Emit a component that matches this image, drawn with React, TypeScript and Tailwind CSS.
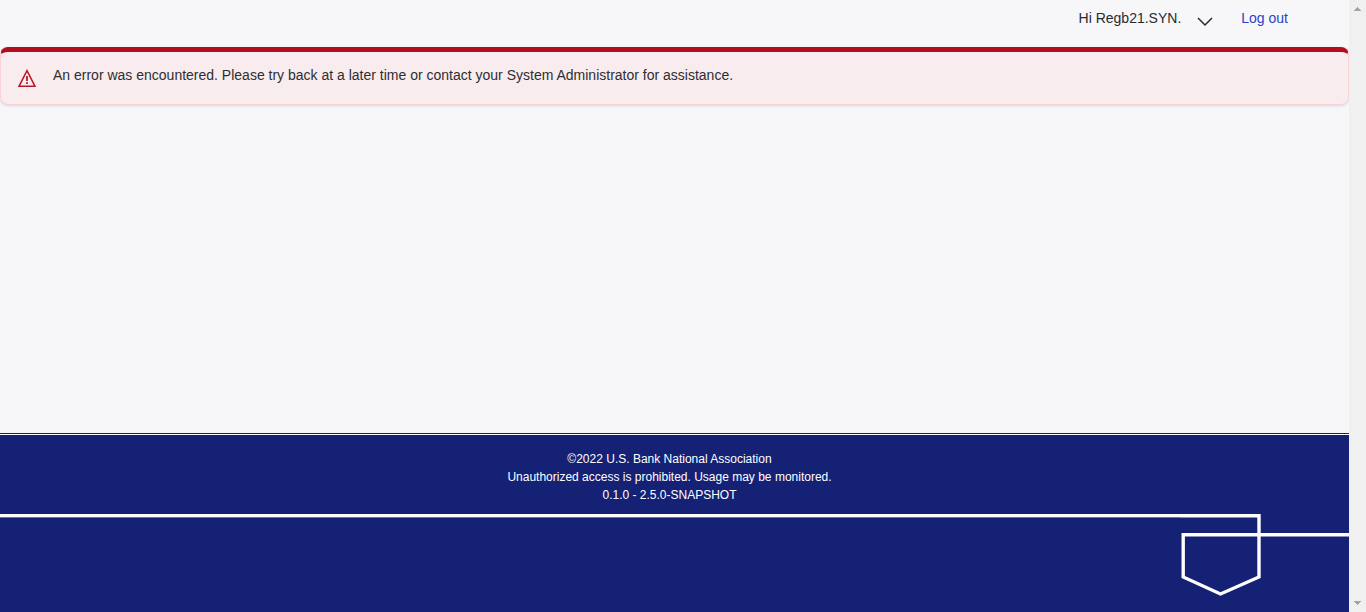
import React from "react";

function Header() {
  return (
    <header className="flex h-[47px] items-start justify-end pt-2 pr-[61px] text-[14px] leading-5">
      <button type="button" className="flex items-start gap-4 text-[#2a2a2e]">
        <span>Hi Regb21.SYN.</span>
        <svg
          className="mt-1 h-4 w-4"
          viewBox="0 0 16 16"
          fill="none"
          stroke="#2a2a2e"
          strokeWidth="1.5"
          aria-hidden="true"
        >
          <path d="M1 6 L8 13 L15 6" />
        </svg>
      </button>
      <a href="#logout" className="ml-7 text-[#2a43c6]">
        Log out
      </a>
    </header>
  );
}

function ErrorAlert() {
  return (
    <div
      role="alert"
      className="flex h-[58px] items-start gap-4 rounded-lg border border-t-[5px] border-[#fad1d6] border-t-[#b50d20] bg-[#f9ecee] pt-[13px] pl-4 text-[14px] leading-5 text-[#2e2e32] shadow-[0_1px_3px_rgba(0,0,0,0.12)]"
    >
      <svg
        className="mt-1 h-5 w-5 shrink-0"
        viewBox="0 0 20 20"
        fill="none"
        stroke="#b9182b"
        strokeWidth="1.5"
        aria-hidden="true"
      >
        <path d="M10 1.6 L18 17.3 H2 Z" />
        <path d="M10 7 V12 M10 13.2 V15" strokeWidth="1.8" />
      </svg>
      <p>
        An error was encountered. Please try back at a later time or contact your System
        Administrator for assistance.
      </p>
    </div>
  );
}

function Footer() {
  return (
    <footer className="border-t border-[#142175]">
      <div className="border-t border-white bg-[#142175]">
        <div className="h-[79px] pt-[15px] pr-[10px] text-center text-[12px] leading-[18px] text-white">
          <p>©2022 U.S. Bank National Association</p>
          <p>Unauthorized access is prohibited. Usage may be monitored.</p>
          <p>0.1.0 - 2.5.0-SNAPSHOT</p>
        </div>
        <div className="flex h-[98px] items-start">
          <div className="h-[4px] grow border-t-[3px] border-b border-t-white border-b-[#6b73a9]" />
          <svg
            className="h-[98px] w-[169px] shrink-0"
            viewBox="0 0 169 98"
            fill="none"
            stroke="#ffffff"
            strokeWidth="3.4"
            aria-hidden="true"
          >
            <path d="M0 1.7 H79 V63 L40.5 80 L3.2 63 V20.7 H169" />
          </svg>
        </div>
      </div>
    </footer>
  );
}

function ScrollTrack() {
  return (
    <div
      className="flex w-[17px] shrink-0 flex-col items-center justify-between bg-[#f0f0f0] pt-[7px] pb-[7px]"
      aria-hidden="true"
    >
      <svg className="h-1 w-[7px]" viewBox="0 0 7 4" fill="#a3a3a3" shapeRendering="crispEdges">
        <path d="M3 0 H4 V1 H5 V2 H6 V3 H7 V4 H0 V3 H1 V2 H2 V1 H3 Z" />
      </svg>
      <svg className="h-1 w-[7px]" viewBox="0 0 7 4" fill="#a3a3a3" shapeRendering="crispEdges">
        <path d="M0 0 H7 V1 H6 V2 H5 V3 H4 V4 H3 V3 H2 V2 H1 V1 H0 Z" />
      </svg>
    </div>
  );
}

export default function App() {
  return (
    <div className="flex min-h-screen bg-[#f7f7fa] font-['Liberation_Sans',Arial,sans-serif]">
      <div className="flex min-w-0 grow flex-col">
        <Header />
        <main className="grow">
          <ErrorAlert />
        </main>
        <Footer />
      </div>
      <ScrollTrack />
    </div>
  );
}
